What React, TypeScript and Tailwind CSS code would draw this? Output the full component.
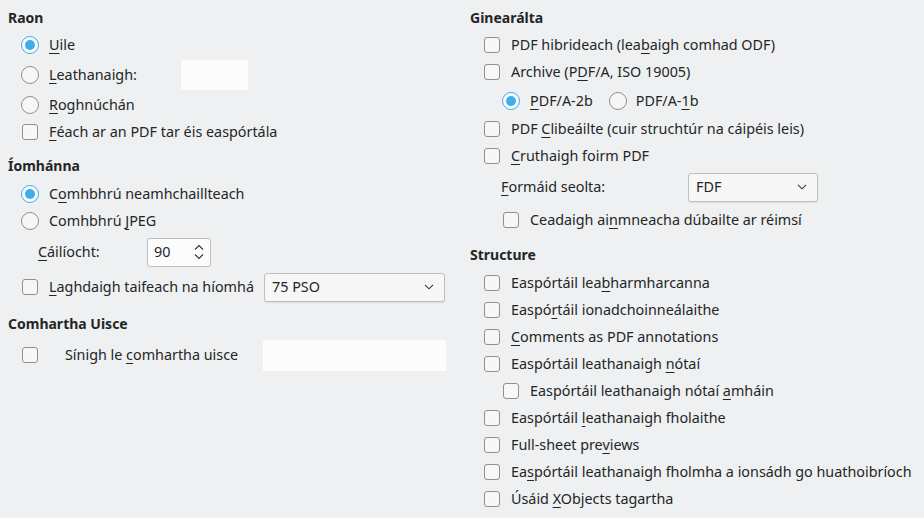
import type { ReactNode } from 'react';

// label text uses "_" before the mnemonic letter
function Mn({ text }: { text: string }) {
  const i = text.indexOf('_');
  if (i < 0) return <>{text}</>;
  return (
    <>
      {text.slice(0, i)}
      <span className="underline underline-offset-[3px] decoration-1">{text[i + 1]}</span>
      {text.slice(i + 2)}
    </>
  );
}

function Check() {
  return <span className="block w-4 h-4 rounded-[3px] border border-[#8e9092] bg-[#f7f7f7]" />;
}

function Radio({ on }: { on?: boolean }) {
  if (on) {
    return (
      <span className="flex w-[18px] h-[18px] rounded-full border border-[#3daee9] bg-[#fcfcfc] items-center justify-center">
        <span className="block w-[10px] h-[10px] rounded-full bg-[#3daee9]" />
      </span>
    );
  }
  return <span className="block w-[18px] h-[18px] rounded-full border border-[#8e9092] bg-[#f7f7f7]" />;
}

function Row({ ind, text, indent = 0, h = 'h-[27px]', children }: {
  ind: ReactNode; text: string; indent?: number; h?: string; children?: ReactNode;
}) {
  return (
    <div className={`flex items-center ${h}`}>
      <div className={indent ? 'ml-[31px] w-5 flex justify-center' : 'ml-3 w-5 flex justify-center'}>{ind}</div>
      <span className="ml-[9px] whitespace-nowrap"><Mn text={text} /></span>
      {children}
    </div>
  );
}

function Heading({ children, className = '' }: { children: ReactNode; className?: string }) {
  return <div className={`h-5 leading-5 font-bold text-[14px] ${className}`}>{children}</div>;
}

function Chevron() {
  return (
    <svg width="10" height="6" viewBox="0 0 10 6" className="shrink-0">
      <path d="M1 0.8 L5 4.8 L9 0.8" fill="none" stroke="#31363b" strokeWidth="1.1" />
    </svg>
  );
}

function Combo({ value, w }: { value: string; w: string }) {
  return (
    <div className={`${w} h-[29px] flex items-center justify-between pl-[7px] pr-[10px] rounded-[3px] border border-[#bcbebf] bg-[#f7f7f7] shadow-[0_1px_1px_rgba(0,0,0,0.08)]`}>
      <span>{value}</span>
      <Chevron />
    </div>
  );
}

export default function App() {
  return (
    <div className="w-[924px] h-[518px] overflow-hidden bg-[#eff0f1] text-[#232627] text-[14.35px] font-['Noto_Sans',sans-serif] flex px-2">
      {/* left column */}
      <div className="w-[462px] flex flex-col">
        <Heading className="mt-2">Raon</Heading>
        <div className="mt-[3px]">
          <Row ind={<Radio on />} text="_Uile" />
          <div className="flex items-center h-[33px]">
            <div className="ml-3 w-5 flex justify-center"><Radio /></div>
            <span className="ml-[9px] w-[132px]"><Mn text="_Leathanaigh:" /></span>
            <div className="w-[67px] h-[30px] bg-[#fcfcfc]" />
          </div>
          <Row ind={<Radio />} text="_Roghnúchán" />
          <Row ind={<Check />} text="_Féach ar an PDF tar éis easpórtála" />
        </div>

        <Heading className="mt-[11px]">Íomhánna</Heading>
        <div className="mt-1">
          <Row ind={<Radio on />} text="C_omhbhrú neamhchaillteach" />
          <Row ind={<Radio />} text="Comhbhrú _JPEG" />
          <div className="flex items-center h-[36px]">
            <span className="ml-[30px] w-[109px]"><Mn text="_Cáilíocht:" /></span>
            <div className="w-[64px] h-[29px] flex items-center justify-between pl-[6px] pr-[5px] rounded-[3px] border border-[#bcbebf] bg-[#fcfcfc]">
              <span>90</span>
              <svg width="12" height="18" viewBox="0 0 12 18">
                <path d="M2 6.5 L6 2.5 L10 6.5" fill="none" stroke="#31363b" strokeWidth="1.1" />
                <path d="M2 11.5 L6 15.5 L10 11.5" fill="none" stroke="#31363b" strokeWidth="1.1" />
              </svg>
            </div>
          </div>
          <div className="flex items-center h-[34px]">
            <div className="ml-3 w-5 flex justify-center"><Check /></div>
            <span className="ml-[9px] w-[215px] whitespace-nowrap"><Mn text="_Laghdaigh taifeach na híomhá" /></span>
            <Combo value="75 PSO" w="w-[181px]" />
          </div>
        </div>

        <Heading className="mt-[10px]">Comhartha Uisce</Heading>
        <div className="mt-1 flex items-center h-[34px]">
          <div className="ml-3 w-5 flex justify-center"><Check /></div>
          <span className="ml-[25px] w-[198px] whitespace-nowrap"><Mn text="Sínigh le _comhartha uisce" /></span>
          <div className="w-[183px] h-[31px] bg-[#fcfcfc]" />
        </div>
      </div>

      {/* right column */}
      <div className="flex-1 flex flex-col">
        <Heading className="mt-2">Ginearálta</Heading>
        <div className="mt-[3px]">
          <Row ind={<Check />} text="PDF hibrideach (lea_baigh comhad ODF)" />
          <Row ind={<Check />} text="Archive (P_DF/A, ISO 19005)" h="h-[28px]" />
          <div className="flex items-center h-[29px]">
            <div className="ml-[31px] w-5 flex justify-center"><Radio on /></div>
            <span className="ml-[9px]"><Mn text="_PDF/A-2b" /></span>
            <div className="ml-[15px] w-5 flex justify-center"><Radio /></div>
            <span className="ml-[8px]"><Mn text="PDF/A-_1b" /></span>
          </div>
          <Row ind={<Check />} text="PDF _Clibeáilte (cuir struchtúr na cáipéis leis)" />
          <Row ind={<Check />} text="_Cruthaigh foirm PDF" />
          <div className="flex items-center h-[36px]">
            <span className="ml-[31px] w-[187px]"><Mn text="_Formáid seolta:" /></span>
            <Combo value="FDF" w="w-[130px]" />
          </div>
          <Row ind={<Check />} indent={1} h="h-[30px]" text="Ceadaigh ai_nmneacha dúbailte ar réimsí" />
        </div>

        <Heading className="mt-[10px]">Structure</Heading>
        <div className="mt-1">
          <Row ind={<Check />} text="Easpórtáil lea_bharmharcanna" />
          <Row ind={<Check />} text="Easpó_rtáil ionadchoinneálaithe" />
          <Row ind={<Check />} text="_Comments as PDF annotations" />
          <Row ind={<Check />} text="Easpórtáil leathanaigh _nótaí" />
          <Row ind={<Check />} indent={1} text="Easpórtáil leathanaigh nótaí _amháin" />
          <Row ind={<Check />} text="Easpórtáil _leathanaigh fholaithe" />
          <Row ind={<Check />} text="Full-sheet pre_views" />
          <Row ind={<Check />} text="Ea_spórtáil leathanaigh fholmha a ionsádh go huathoibríoch" />
          <Row ind={<Check />} text="Úsáid _XObjects tagartha" />
        </div>
      </div>
    </div>
  );
}
